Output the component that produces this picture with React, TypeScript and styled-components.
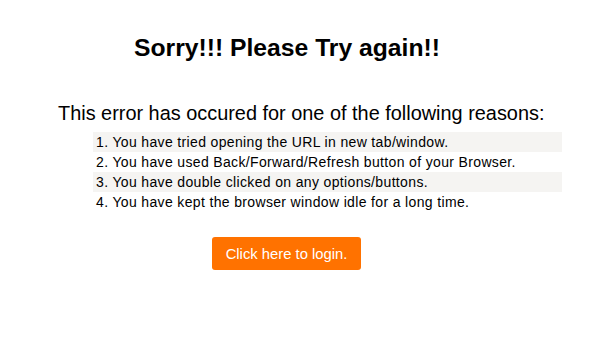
import React from 'react';
import styled, { createGlobalStyle } from 'styled-components';

const GlobalStyle = createGlobalStyle`
  body {
    margin: 0;
    background: #ffffff;
    font-family: "Liberation Sans", Arial, sans-serif;
    color: #000000;
  }
`;

const Page = styled.div`
  width: 606px;
  height: 338px;
  padding-top: 34px;
  box-sizing: border-box;
`;

const Title = styled.h1`
  margin: 0;
  width: 574px;
  text-align: center;
  font-size: 24.7px;
  font-weight: bold;
  line-height: 28px;
`;

const Intro = styled.p`
  margin: 39px 0 0 58px;
  font-size: 19.9px;
  line-height: 24px;
`;

const Reasons = styled.ol`
  list-style: none;
  margin: 7px 0 0 93px;
  padding: 0;
  width: 469px;
`;

const Reason = styled.li<{ $shaded: boolean }>`
  height: 20px;
  line-height: 20px;
  padding-left: 3px;
  font-size: 14px;
  letter-spacing: 0.35px;
  white-space: nowrap;
  background: ${(p) => (p.$shaded ? '#f5f4f2' : 'transparent')};
`;

const LoginButton = styled.button`
  margin: 25px 0 0 212px;
  width: 149px;
  height: 33px;
  border: none;
  border-radius: 3px;
  background: #ff7200;
  color: #ffffff;
  font-family: "Liberation Sans", Arial, sans-serif;
  font-size: 14.8px;
  cursor: pointer;
`;

const reasons = [
  'You have tried opening the URL in new tab/window.',
  'You have used Back/Forward/Refresh button of your Browser.',
  'You have double clicked on any options/buttons.',
  'You have kept the browser window idle for a long time.',
];

export default function App() {
  return (
    <>
      <GlobalStyle />
      <Page>
        <Title>Sorry!!! Please Try again!!</Title>
        <Intro>This error has occured for one of the following reasons:</Intro>
        <Reasons>
          {reasons.map((r, i) => (
            <Reason key={i} $shaded={i % 2 === 0}>
              {i + 1}. {r}
            </Reason>
          ))}
        </Reasons>
        <LoginButton>Click here to login.</LoginButton>
      </Page>
    </>
  );
}
